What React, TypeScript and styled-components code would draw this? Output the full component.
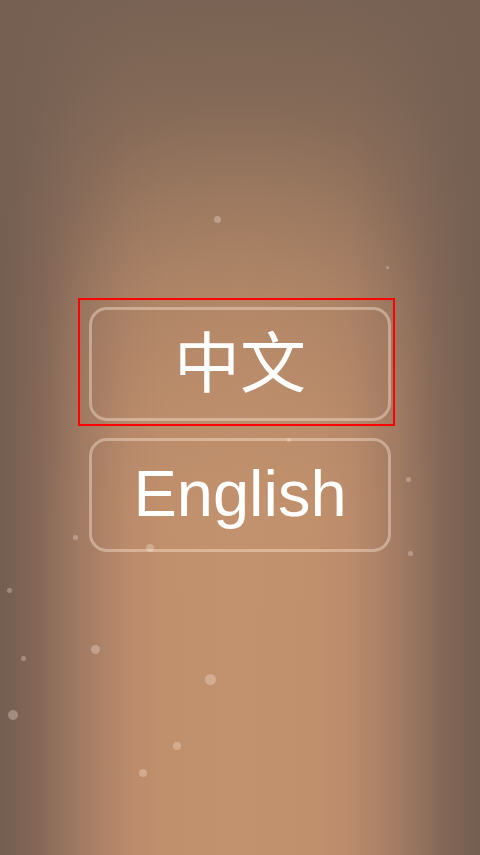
import React from "react";
import styled, { createGlobalStyle } from "styled-components";

const GlobalStyle = createGlobalStyle`
  html, body {
    margin: 0;
    padding: 0;
    height: 100%;
  }
  body {
    font-family: "Liberation Sans", "Noto Sans CJK SC", sans-serif;
    background: #735e50;
  }
`;

const Screen = styled.div`
  position: relative;
  width: 480px;
  height: 855px;
  overflow: hidden;
  display: flex;
  align-items: center;
  justify-content: center;
  background:
    radial-gradient(ellipse 190px 260px at 50% 42%, rgba(196, 146, 110, 0.35) 0%, rgba(196, 146, 110, 0) 100%),
    linear-gradient(to bottom, rgba(117, 96, 82, 0.95) 0%, rgba(117, 96, 82, 0.8) 12%, rgba(117, 96, 82, 0.55) 24%, rgba(117, 96, 82, 0.28) 36%, rgba(117, 96, 82, 0.1) 48%, rgba(117, 96, 82, 0) 60%),
    linear-gradient(to right, #735e50 0%, #856858 8%, #a27b63 17%, #bb8b6b 27%, #c0906c 34%, #c2916d 50%, #c0906c 66%, #bb8b6b 73%, #a27b63 83%, #856858 92%, #735e50 100%);
`;

const Dot = styled.span<{ $size: number }>`
  position: absolute;
  width: ${(p) => p.$size}px;
  height: ${(p) => p.$size}px;
  margin: ${(p) => -p.$size / 2}px 0 0 ${(p) => -p.$size / 2}px;
  border-radius: 50%;
  background: rgba(255, 240, 230, 0.3);
`;

const Menu = styled.div`
  width: 302px;
  margin-top: -5px;
  display: flex;
  flex-direction: column;
  gap: 12px;
`;

const Focused = styled.div`
  margin: 0 -4px 0 -11px;
  padding: 7px 2px 3px 9px;
  border: 2px solid #ff0000;
`;

const LangButton = styled.button<{ $cjk?: boolean }>`
  box-sizing: border-box;
  width: 100%;
  height: 114px;
  display: flex;
  align-items: center;
  justify-content: center;
  padding: ${(p) => (p.$cjk ? "0 0 12px" : "0 0 4px")};
  background: transparent;
  border: 3px solid rgba(255, 235, 220, 0.4);
  border-radius: 18px;
  color: #ffffff;
  font-family: ${(p) =>
    p.$cjk ? '"Noto Sans CJK SC", sans-serif' : '"Liberation Sans", Arial, sans-serif'};
  font-size: ${(p) => (p.$cjk ? "66px" : "65px")};
  font-weight: 400;
  line-height: 1;
  cursor: pointer;
  outline: none;
`;

// floating bokeh specks over the backdrop
const dots = [
  { x: 217, y: 219, s: 7 },
  { x: 387, y: 267, s: 3 },
  { x: 289, y: 440, s: 4 },
  { x: 408, y: 479, s: 5 },
  { x: 75, y: 537, s: 5 },
  { x: 150, y: 548, s: 8 },
  { x: 410, y: 553, s: 5 },
  { x: 9, y: 590, s: 5 },
  { x: 95, y: 649, s: 9 },
  { x: 23, y: 658, s: 5 },
  { x: 210, y: 679, s: 11 },
  { x: 13, y: 715, s: 10 },
  { x: 177, y: 746, s: 8 },
  { x: 143, y: 773, s: 8 },
];

const App: React.FC = () => {
  return (
    <>
      <GlobalStyle />
      <Screen>
        {dots.map((d, i) => (
          <Dot key={i} $size={d.s} style={{ left: d.x, top: d.y }} />
        ))}
        <Menu>
          <Focused>
            <LangButton $cjk>中文</LangButton>
          </Focused>
          <LangButton>English</LangButton>
        </Menu>
      </Screen>
    </>
  );
};

export default App;
